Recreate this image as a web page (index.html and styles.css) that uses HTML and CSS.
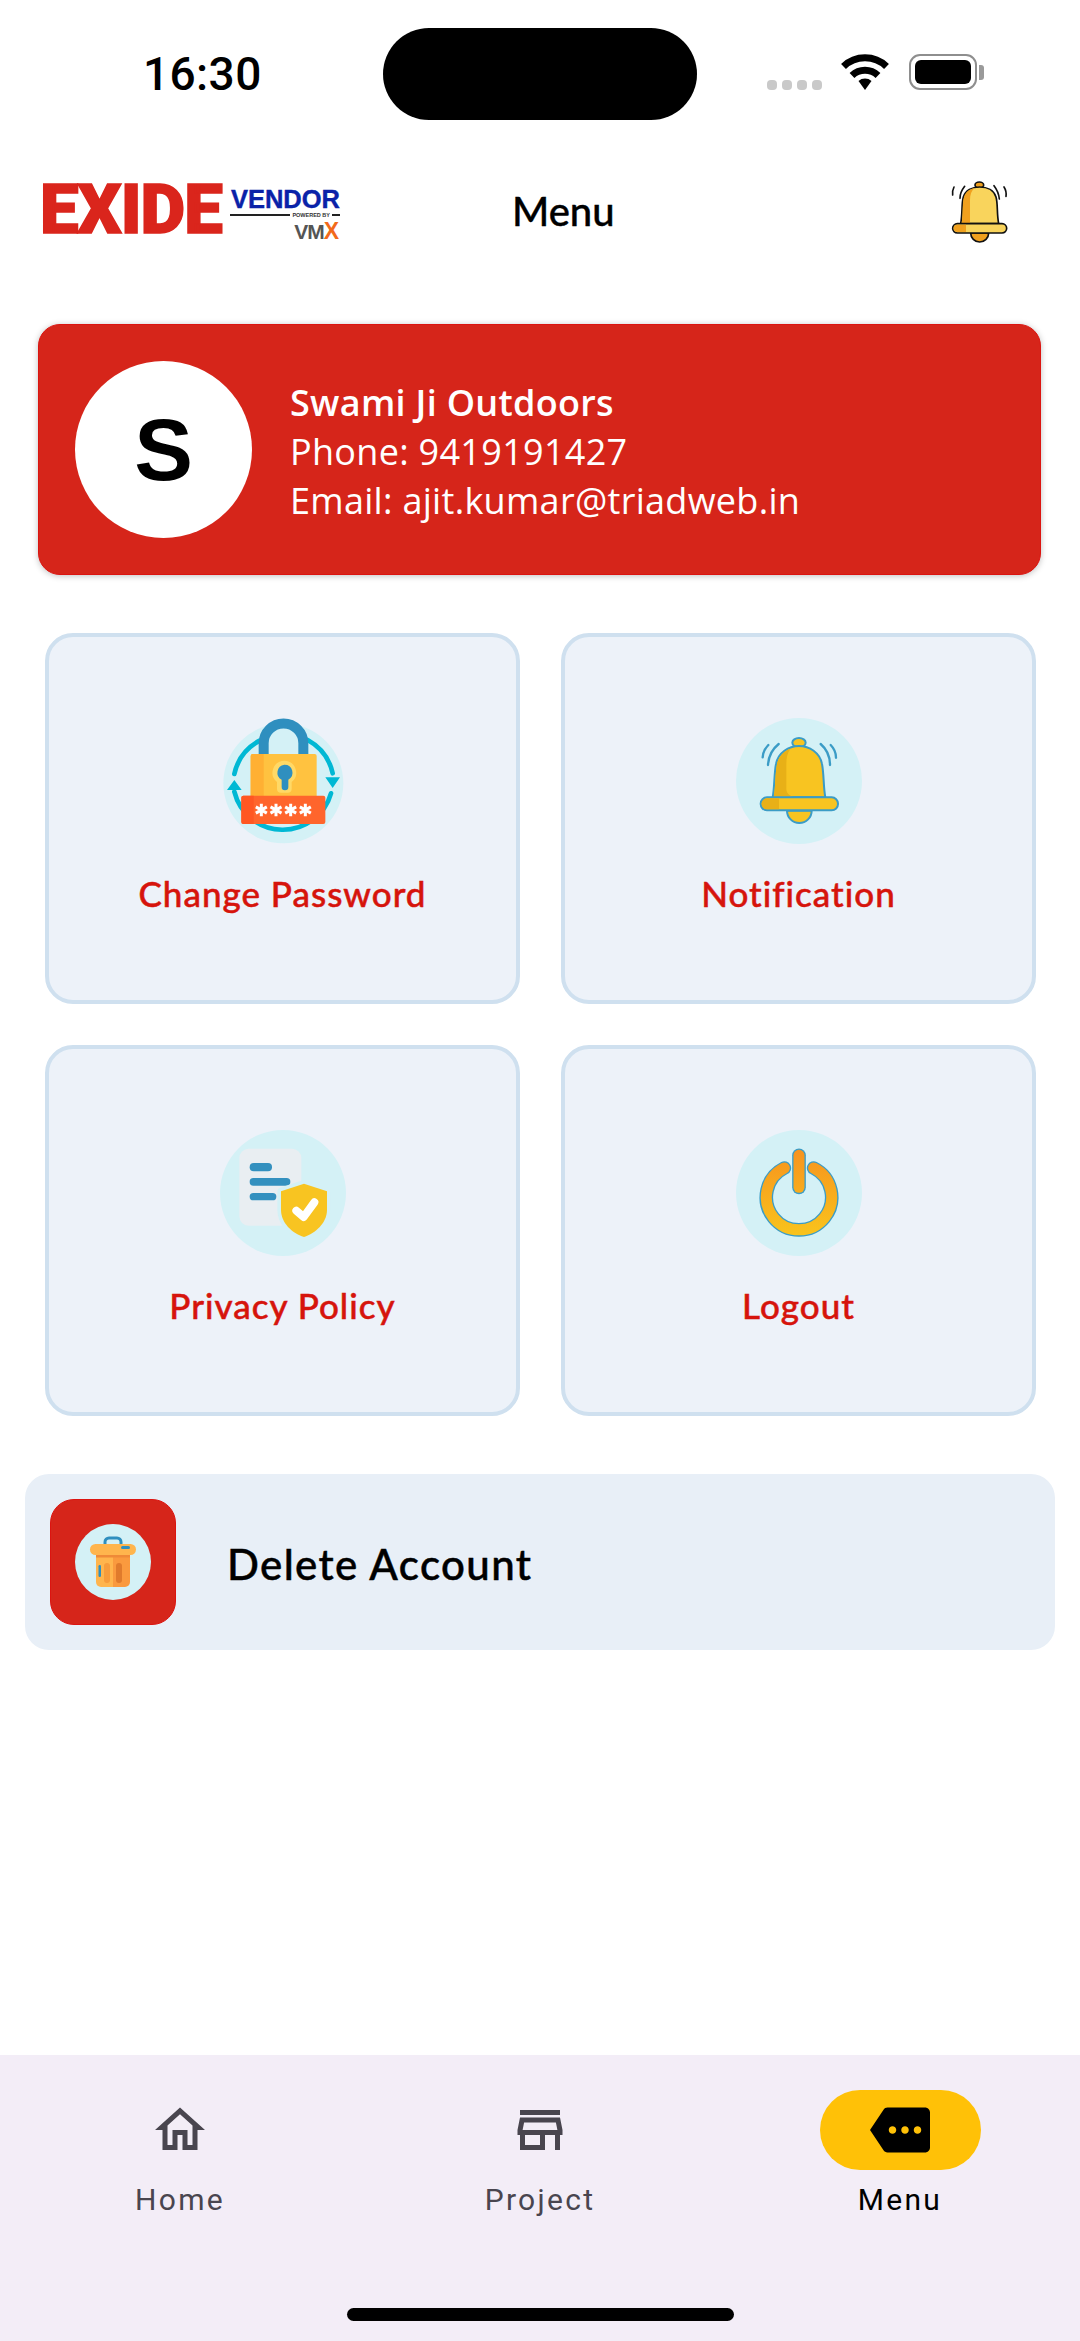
FILE: index.html
```html
<!doctype html>
<html lang="en">
<head>
  <meta charset="utf-8">
  <meta content="width=device-width, initial-scale=1" name="viewport">
  <title>Menu</title>
  <link rel="stylesheet" href="styles.css">
</head>
<body>
  <div id="page">
    <div class="status_bar">
      <span class="status_time">16:30</span>
      <div class="island"></div>
      <div class="signal"><i></i><i></i><i></i><i></i></div>
      <svg class="wifi" viewBox="0 0 48 36" width="48" height="36">
        <g fill="none" stroke="#000" stroke-width="7">
          <path d="M2.5 12.5a31 31 0 0 1 43 0"/>
          <path d="M11 21.5a19 19 0 0 1 26 0"/>
        </g>
        <path d="M17.5 27a10 10 0 0 1 13 0L24 36z"/>
      </svg>
      <div class="battery"><div class="battery_level"></div></div>
      <div class="battery_tip"></div>
    </div>

    <div class="header">
      <div class="logo">
        <span class="logo_exide">EXIDE</span>
        <div class="logo_side">
          <span class="logo_vendor">VENDOR</span>
          <div class="logo_powered"><i></i><span>POWERED BY</span><b></b></div>
          <span class="logo_vmx">VM<em>X</em></span>
        </div>
      </div>
      <span class="header_title">Menu</span>
      <svg class="header_bell" viewBox="60 40 180 195" width="60" height="65">
        <g fill="none" stroke="#111" stroke-width="5" stroke-linecap="round">
          <path d="M104 62q-14 18-14 36"/>
          <path d="M72 64q-6 12-4 24"/>
          <path d="M192 60q14 18 16 40"/>
          <path d="M222 64q8 12 6 28"/>
        </g>
        <ellipse cx="148" cy="58" rx="13" ry="9" fill="#f0a01e" stroke="#111" stroke-width="5"/>
        <path d="M122 202a27 27 0 0 0 54 0z" fill="#f0a01e" stroke="#111" stroke-width="5"/>
        <path d="M92 174c6-30 2-60 8-80 6-20 26-30 49-30s43 10 49 30c6 20 2 50 8 80z" fill="#f9d45c" stroke="#111" stroke-width="5"/>
        <path d="M95 172c5-28 1-58 7-78 5-16 18-24 32-27-10 8-14 20-14 36 0 24 0 54 0 69z" fill="#f0a01e"/>
        <rect x="68" y="174" width="162" height="28" rx="14" fill="#f9d45c" stroke="#111" stroke-width="5"/>
        <path d="M82 177h26v22H82a11 11 0 0 1 0-22z" fill="#f0a01e"/>
      </svg>
    </div>

    <div class="profile_card">
      <div class="avatar">S</div>
      <div class="profile_text">
        <div class="profile_name">Swami Ji Outdoors</div>
        <div>Phone: 9419191427</div>
        <div>Email: ajit.kumar@triadweb.in</div>
      </div>
    </div>

    <div class="menu_grid">
      <div class="menu_card">
        <svg class="menu_icon" viewBox="117 84 378 378">
          <circle cx="307" cy="280" r="180" fill="#d4f1f6"/>
          <g fill="none" stroke="#00b8d4" stroke-width="14" stroke-linecap="round">
            <path d="M160 252a150 150 0 0 1 76-100"/>
            <path d="M380 150a150 150 0 0 1 75 100"/>
            <path d="M160 305a150 150 0 0 0 290 5"/>
          </g>
          <path d="M138 300l22-30 22 30zM433 262h44l-22 32z" fill="#00b8d4"/>
          <path d="M248 195v-35a59.500 59.500 0 0 1 119 0v35" fill="none" stroke="#2f8fbf" stroke-width="30"/>
          <rect x="209" y="192" width="198" height="140" rx="6" fill="#ffc240"/>
          <path d="M215 192h33v140h-33a6 6 0 0 1-6-6V198a6 6 0 0 1 6-6z" fill="#ffb033"/>
          <path d="M310 212a36 36 0 0 1 22 64v20a12 12 0 0 1-12 12h-20a12 12 0 0 1-12-12v-20a36 36 0 0 1 22-64z" fill="#ffd966"/>
          <path d="M310 224a24 24 0 0 1 12 45v22a10 10 0 0 1-20 0v-22a24 24 0 0 1 8-45z" fill="#2f8fbf"/>
          <rect x="181" y="317" width="252" height="85" rx="6" fill="#ff652c"/>
          <path d="M187 317h31v85h-31a6 6 0 0 1-6-6v-73a6 6 0 0 1 6-6z" fill="#ff5722"/>
          <g stroke="#fff" stroke-width="9">
            <path d="M241 341v38M224.500 350.500l33 19M224.500 369.500l33-19"/>
            <path d="M285 341v38M268.500 350.500l33 19M268.500 369.500l33-19"/>
            <path d="M329 341v38M312.500 350.500l33 19M312.500 369.500l33-19"/>
            <path d="M373 341v38M356.500 350.500l33 19M356.500 369.500l33-19"/>
          </g>
        </svg>
        <span class="menu_label">Change Password</span>
      </div>

      <div class="menu_card">
        <svg class="menu_icon" viewBox="73 54 378 378">
          <circle cx="262" cy="243" r="189" fill="#d4f1f6"/>
          <g fill="none" stroke="#3b9cc6" stroke-width="7" stroke-linecap="round">
            <path d="M170 135q-16 16-17 37"/>
            <path d="M201 132q-30 24-32 63"/>
            <path d="M327 132q28 24 28 63"/>
            <path d="M357 135q16 16 16 38"/>
          </g>
          <ellipse cx="262" cy="128" rx="20" ry="14" fill="#f8c421" stroke="#3b9cc6" stroke-width="6"/>
          <path d="M226 332a37 37 0 0 0 74 0z" fill="#f8c421" stroke="#3b9cc6" stroke-width="6"/>
          <path d="M183 292c6-30 4-70 10-100 6-34 38-54 69-54s63 20 69 54c6 30 4 70 10 100z" fill="#f8c421" stroke="#3b9cc6" stroke-width="6"/>
          <path d="M186 290c6-30 4-68 10-98 4-22 20-38 40-46-10 14-12 30-12 50v70c0 12 8 20 20 24z" fill="#e8b017"/>
          <rect x="147" y="292" width="232" height="39" rx="19" fill="#f8c421" stroke="#3b9cc6" stroke-width="6"/>
          <path d="M166 295h36v33h-36a16.500 16.500 0 0 1 0-33z" fill="#e8b017"/>
        </svg>
        <span class="menu_label">Notification</span>
      </div>

      <div class="menu_card">
        <svg class="menu_icon" viewBox="89 61 378 378">
          <circle cx="278" cy="250" r="189" fill="#d4f1f6"/>
          <rect x="147" y="117" width="186" height="231" rx="28" fill="#e9eef2"/>
          <g fill="#3390bf">
            <rect x="178" y="160" width="67" height="25" rx="12"/>
            <rect x="178" y="205" width="122" height="23" rx="11"/>
            <rect x="178" y="250" width="80" height="22" rx="11"/>
          </g>
          <path d="M341 222l69 23v55c0 40-35 70-69 82-36-12-69-42-69-82v-55z" fill="#f8c421" stroke="#d4f1f6" stroke-width="22" stroke-linejoin="round"/>
          <path d="M341 222l69 23v55c0 40-35 70-69 82-36-12-69-42-69-82v-55z" fill="#f8c421"/>
          <path d="M318 303l22 19 32-44" fill="none" stroke="#fff" stroke-width="24" stroke-linecap="round" stroke-linejoin="round"/>
        </svg>
        <span class="menu_label">Privacy Policy</span>
      </div>

      <div class="menu_card">
        <svg class="menu_icon" viewBox="73 61 378 378">
          <defs>
            <linearGradient id="power_fill" gradientUnits="userSpaceOnUse" x1="0" y1="120" x2="0" y2="380">
              <stop offset="0" stop-color="#f7931e"/>
              <stop offset="1" stop-color="#f9c41c"/>
            </linearGradient>
          </defs>
          <circle cx="262" cy="250" r="189" fill="#d4f1f6"/>
          <g fill="none" stroke-linecap="round">
            <path d="M218 175a98 98 0 1 0 88 0" stroke="#3b9cc6" stroke-width="41"/>
            <path d="M218 175a98 98 0 1 0 88 0" stroke="url(#power_fill)" stroke-width="33"/>
            <path d="M262 137v96" stroke="#3b9cc6" stroke-width="41"/>
            <path d="M262 137v96" stroke="url(#power_fill)" stroke-width="33"/>
          </g>
        </svg>
        <span class="menu_label">Logout</span>
      </div>
    </div>

    <div class="delete_row">
      <div class="delete_box">
        <svg viewBox="0 0 76 76" width="76" height="76">
          <circle cx="38" cy="38" r="38" fill="#d4f1f6"/>
          <path d="M30 20v-2a4 4 0 0 1 4-4h8a4 4 0 0 1 4 4v2" fill="none" stroke="#2f8fbf" stroke-width="3"/>
          <path d="M21 31h17v32H26a5 5 0 0 1-5-5z" fill="#ffb54d"/>
          <path d="M38 31h17v27a5 5 0 0 1-5 5H38z" fill="#fa9a3e"/>
          <rect x="15" y="20" width="46" height="11" rx="5.500" fill="#ffb54d"/>
          <rect x="21" y="31" width="34" height="2.500" fill="#ef8a38"/>
          <rect x="23.500" y="41" width="2.500" height="12" rx="1.200" fill="#2f8fbf"/>
          <rect x="29" y="39" width="6" height="20" rx="3" fill="#f79c3b"/>
          <rect x="41" y="39" width="6" height="20" rx="3" fill="#e07b2c"/>
          <rect x="46" y="22" width="9" height="3" rx="1.500" fill="#2f8fbf"/>
        </svg>
      </div>
      <span class="delete_label">Delete Account</span>
    </div>

    <div class="bottom_nav">
      <div class="nav_items">
        <div class="nav_item">
          <div class="nav_icon">
            <svg viewBox="0 0 24 24" width="60" height="60" fill="#49454f"><path d="M12 5.690l5 4.500V18h-2v-6H9v6H7v-7.810l5-4.500M12 3L2 12h3v8h6v-6h2v6h6v-8h3L12 3z"/></svg>
          </div>
          <span class="nav_label">Home</span>
        </div>
        <div class="nav_item">
          <div class="nav_icon">
            <svg viewBox="0 0 24 24" width="60" height="60" fill="#49454f"><path d="M18.360 9l.6 3H5.040l.6-3h12.720M20 4H4v2h16V4zm0 3H4l-1 5v2h1v6h10v-6h4v6h2v-6h1v-2l-1-5zM6 18v-4h6v4H6z"/></svg>
          </div>
          <span class="nav_label">Project</span>
        </div>
        <div class="nav_item nav_active">
          <div class="nav_icon">
            <svg viewBox="0 0 24 24" width="60" height="60"><path d="M22 3H7c-.69 0-1.230.35-1.590.88L0 12l5.410 8.110c.36.53.9.89 1.590.89h15c1.100 0 2-.9 2-2V5c0-1.100-.9-2-2-2zM9 13.500c-.83 0-1.500-.67-1.500-1.500s.67-1.500 1.500-1.500 1.500.67 1.500 1.500-.67 1.500-1.500 1.500zm5 0c-.83 0-1.500-.67-1.500-1.500s.67-1.500 1.500-1.500 1.500.67 1.500 1.500-.67 1.500-1.500 1.500zm5 0c-.83 0-1.500-.67-1.500-1.500s.67-1.500 1.500-1.500 1.500.67 1.500 1.500-.67 1.500-1.500 1.500z"/></svg>
          </div>
          <span class="nav_label">Menu</span>
        </div>
      </div>
      <div class="home_indicator"></div>
    </div>
  </div>
</body>
</html>
```

FILE: styles.css
```css
* {
  margin: 0; padding: 0;
  box-sizing: border-box;
}
html, body {
  width: 100%;
  height: 100%;
  overflow: hidden;
  background: #fff;
}
#page {
  display: flex;
  flex-direction: column;
  height: 2341px;
  font-family: 'Lato', sans-serif;
}

/* Status bar */
.status_bar {
  display: flex;
  align-items: flex-start;
  height: 130px;
  padding: 28px 0 0 143px;
}
.status_time {
  width: 240px;
  margin-top: 20px;
  font-family: 'Roboto', sans-serif;
  font-size: 46px;
  font-weight: 500;
  line-height: 52px;
  letter-spacing: 0.4px;
  color: #000;
}
.island {
  width: 314px;
  height: 92px;
  border-radius: 46px;
  background: #000;
}
.signal {
  display: flex;
  gap: 5px;
  margin: 52px 19px 0 70px;
}
.signal i {
  width: 10px;
  height: 10px;
  border-radius: 4px;
  background: #c9c9c9;
}
.wifi {
  margin: 26px 20px 0 0;
}
.battery {
  width: 68px;
  height: 36px;
  margin-top: 26px;
  padding: 4px;
  border: 2.5px solid #8e8e8e;
  border-radius: 11px;
}
.battery_level {
  width: 100%;
  height: 100%;
  border-radius: 6px;
  background: #000;
}
.battery_tip {
  width: 5px;
  height: 15px;
  margin: 37px 0 0 2px;
  border-radius: 0 3px 3px 0;
  background: #9a9a9a;
}

/* Header */
.header {
  display: flex;
  align-items: center;
  height: 194px;
  padding: 0 70px 32px 40px;
}
.logo {
  display: flex;
  align-items: flex-start;
  width: 300px;
}
.logo_exide {
  width: 186px;
  font-family: 'Roboto', sans-serif;
  font-size: 69px;
  font-weight: 900;
  line-height: 58px;
  letter-spacing: -1px;
  color: #da251c;
  -webkit-text-stroke: 1.5px #da251c;
}
.logo_side {
  display: flex;
  flex-direction: column;
  align-items: flex-end;
  width: 110px;
  margin-left: 4px;
}
.logo_vendor {
  font-family: 'Liberation Sans', sans-serif;
  font-size: 25.5px;
  font-weight: 700;
  line-height: 20px;
  margin-top: 8px;
  color: #0a22a8;
  -webkit-text-stroke: 0.4px #0a22a8;
}
.logo_powered {
  display: flex;
  align-items: center;
  gap: 2px;
  width: 100%;
  margin-top: 3px;
  font-family: 'Liberation Sans', sans-serif;
  font-size: 5.5px;
  font-weight: 700;
  line-height: 6px;
  color: #333;
}
.logo_powered i {
  flex: 1;
  height: 1.5px;
  background: #222;
}
.logo_powered b {
  width: 8px;
  height: 1.5px;
  background: #222;
}
.logo_vmx {
  margin: 4px 2px 0 0;
  font-family: 'Liberation Sans', sans-serif;
  font-size: 21px;
  font-weight: 700;
  line-height: 18px;
  letter-spacing: -1px;
  color: #555;
}
.logo_vmx em {
  font-style: normal;
  font-size: 23px;
  line-height: 18px;
  color: #f26a1b;
}
.header_title {
  margin-left: 172px;
  font-size: 40px;
  font-weight: 500;
  color: #000;
  -webkit-text-stroke: 0.4px #000;
}
.header_bell {
  margin-left: auto;
}

/* Profile card */
.profile_card {
  display: flex;
  align-items: center;
  gap: 38px;
  width: 1003px;
  height: 251px;
  margin-left: 38px;
  padding-left: 36px;
  border: 1px solid #dc1410;
  border-radius: 22px;
  background: #d6251a;
  box-shadow: 0 1px 6px rgba(0,0,0,0.25);
}
.avatar {
  display: flex;
  align-items: center;
  justify-content: center;
  width: 177px;
  height: 177px;
  border-radius: 50%;
  background: #fff;
  font-family: 'Liberation Sans', sans-serif;
  font-size: 88px;
  font-weight: 700;
  color: #000;
}
.profile_text {
  padding-top: 4px;
  font-family: 'Open Sans', sans-serif;
  font-size: 36px;
  line-height: 49px;
  letter-spacing: 0.3px;
  color: #fff;
}
.profile_name {
  font-weight: 600;
}

/* Menu grid */
.menu_grid {
  display: grid;
  grid-template-columns: 475px 475px;
  grid-auto-rows: 371px;
  gap: 41px;
  margin: 58px 0 0 45px;
}
.menu_card {
  display: flex;
  flex-direction: column;
  align-items: center;
  padding-top: 81px;
  border: 4px solid #cfe0ef;
  border-radius: 28px;
  background: #edf2f9;
}
.menu_icon {
  width: 126px;
  height: 126px;
}
.menu_label {
  margin-top: 27px;
  font-size: 35px;
  font-weight: 500;
  line-height: 44px;
  letter-spacing: 1px;
  color: #d6140c;
  -webkit-text-stroke: 0.5px #d6140c;
}

/* Delete row */
.delete_row {
  display: flex;
  align-items: center;
  gap: 51px;
  width: 1030px;
  height: 176px;
  margin: 58px 0 0 25px;
  padding-left: 25px;
  border-radius: 24px;
  background: #e8eff7;
}
.delete_box {
  display: flex;
  align-items: center;
  justify-content: center;
  width: 126px;
  height: 126px;
  border: 1px solid #dc1410;
  border-radius: 24px;
  background: #d6251a;
}
.delete_label {
  padding-top: 3px;
  font-size: 42px;
  font-weight: 500;
  letter-spacing: 1.4px;
  color: #000;
  -webkit-text-stroke: 0.5px #000;
}

/* Bottom nav */
.bottom_nav {
  display: flex;
  flex-direction: column;
  align-items: center;
  height: 286px;
  margin-top: auto;
  background: #f3edf7;
}
.nav_items {
  display: flex;
  width: 100%;
  padding-top: 35px;
}
.nav_item {
  display: flex;
  flex: 1;
  flex-direction: column;
  align-items: center;
  color: #49454f;
}
.nav_icon {
  display: flex;
  align-items: center;
  justify-content: center;
  width: 161px;
  height: 80px;
  border-radius: 40px;
}
.nav_active .nav_icon {
  background: #ffc107;
}
.nav_active {
  color: #000;
}
.nav_label {
  margin-top: 10px;
  font-family: 'Roboto', sans-serif;
  font-size: 30px;
  line-height: 40px;
  letter-spacing: 2.3px;
}
.home_indicator {
  width: 387px;
  height: 13px;
  margin-top: 88px;
  border-radius: 7px;
  background: #000;
}
```
